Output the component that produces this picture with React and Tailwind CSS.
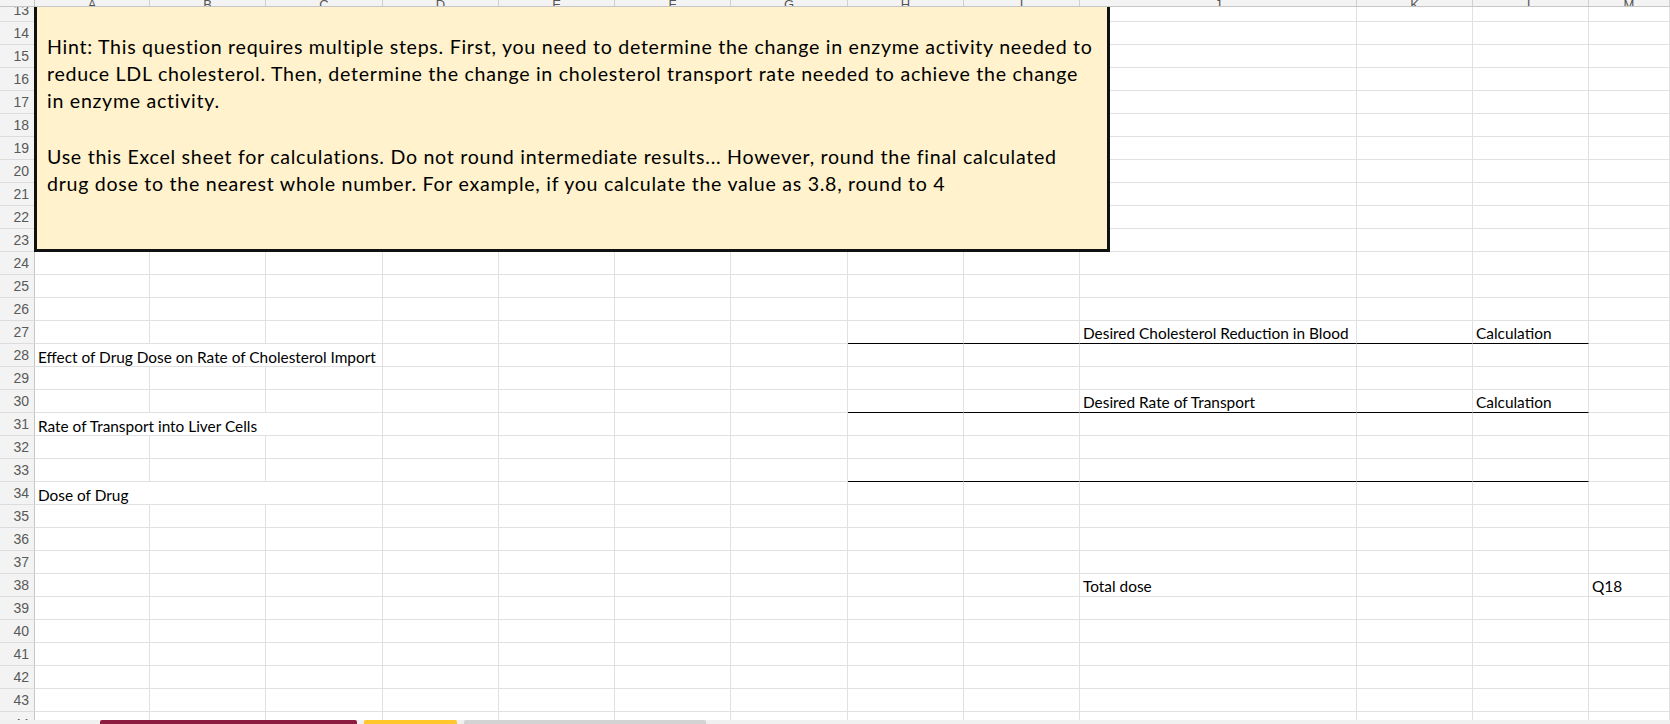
import React from "react";

// column widths (A..L), M takes the rest
const COLS = [
  "w-[115px]",
  "w-[116px]",
  "w-[117px]",
  "w-[116px]",
  "w-[116px]",
  "w-[116px]",
  "w-[117px]",
  "w-[116px]",
  "w-[116px]",
  "w-[277px]",
  "w-[116px]",
  "w-[116px]",
  "flex-1",
];
const LETTERS = ["A", "B", "C", "D", "E", "F", "G", "H", "I", "J", "K", "L", "M"];

// sheet contents by row number
const CONTENT = {
  27: {
    cells: { 9: "Desired Cholesterol Reduction in Blood", 11: "Calculation" },
    underline: true,
  },
  28: { merged: { text: "Effect of Drug Dose on Rate of Cholesterol Import", span: 3, width: "w-[348px]" } },
  30: {
    cells: { 9: "Desired Rate of Transport", 11: "Calculation" },
    underline: true,
  },
  31: { merged: { text: "Rate of Transport into Liver Cells", span: 3, width: "w-[348px]" } },
  33: { underline: true },
  34: { merged: { text: "Dose of Drug", span: 3, width: "w-[348px]" } },
  38: { cells: { 9: "Total dose", 12: "Q18" } },
};

function Cell({ width, text, dark, low }) {
  return (
    <div
      className={`${width} shrink-0 h-full flex items-end border-r border-r-[#e1e1e1] border-b ${
        dark ? "border-b-black" : "border-b-[#e1e1e1]"
      } overflow-visible`}
    >
      {text && (
        <span
          className={`pl-[3px] whitespace-nowrap text-[15.4px] text-black font-['Lato',sans-serif] ${
            low ? "leading-[17px]" : "leading-[20px]"
          }`}
        >
          {text}
        </span>
      )}
    </div>
  );
}

function Row({ n, heightClass }) {
  const data = CONTENT[n] || {};
  const cells = [];
  let i = 0;
  while (i < COLS.length) {
    if (i === 0 && data.merged) {
      cells.push(<Cell key={i} width={data.merged.width} text={data.merged.text} low />);
      i += data.merged.span;
      continue;
    }
    const dark = data.underline && i >= 7 && i <= 11;
    cells.push(<Cell key={i} width={COLS[i]} text={data.cells?.[i]} dark={dark} />);
    i++;
  }
  return (
    <div className={`flex ${heightClass} shrink-0 overflow-hidden`}>
      <div className="w-[35px] shrink-0 h-full bg-[#f3f3f3] border-r border-r-[#c6c6c6] border-b border-b-[#dcdcdc] flex items-end justify-end overflow-hidden">
        <span className="pr-[5px] pb-[2px] text-[14px] leading-[18px] text-[#595959] font-['Liberation_Sans',sans-serif]">
          {n}
        </span>
      </div>
      {cells}
    </div>
  );
}

export default function App() {
  const rows = [];
  for (let n = 14; n <= 43; n++) rows.push(n);

  return (
    <div className="w-[1670px] h-[724px] overflow-hidden bg-white flex flex-col">
      {/* column header, mostly scrolled away */}
      <div className="flex h-[7px] shrink-0 bg-[#f3f3f3] border-b border-b-[#c6c6c6] overflow-hidden relative z-10">
        <div className="w-[35px] shrink-0 border-r border-r-[#c6c6c6]" />
        {COLS.map((w, i) => (
          <div
            key={i}
            className={`${w} shrink-0 h-full border-r border-r-[#d0d0d0] flex items-end justify-center`}
          >
            <span className="block leading-[14px] text-[13px] text-[#555] font-['Liberation_Sans',sans-serif] translate-y-[6px]">
              {LETTERS[i]}
            </span>
          </div>
        ))}
      </div>

      {/* sheet body */}
      <div className="relative flex-1 overflow-hidden flex flex-col">
        <Row n={13} heightClass="h-[15px]" />
        {rows.map((n) => (
          <Row key={n} n={n} heightClass="h-[23px]" />
        ))}
        <div className="flex h-[8px] shrink-0 overflow-hidden items-start">
          <div className="w-[35px] shrink-0 h-full bg-[#f3f3f3] border-r border-r-[#c6c6c6] flex justify-end overflow-hidden">
            <span className="pr-[5px] pt-[3px] text-[14px] leading-[18px] text-[#595959] font-['Liberation_Sans',sans-serif]">
              44
            </span>
          </div>
          {COLS.map((w, i) => (
            <div key={i} className={`${w} shrink-0 h-full border-r border-r-[#e1e1e1]`} />
          ))}
        </div>

        {/* hint text box */}
        <div className="absolute left-[34px] top-[-3px] w-[1076px] h-[248px] bg-[#fff2cc] border-[3px] border-[#111]">
          <div className="pl-[10px] pt-[26px] text-[19.6px] tracking-[0.72px] leading-[27px] text-black font-['Lato',sans-serif] whitespace-nowrap">
            <div>
              Hint: This question requires multiple steps. First, you need to determine the change in enzyme activity needed to
            </div>
            <div>
              reduce LDL cholesterol. Then, determine the change in cholesterol transport rate needed to achieve the change
            </div>
            <div>in enzyme activity.</div>
            <div className="h-[29px]" />
            <div>
              Use this Excel sheet for calculations. Do not round intermediate results... However, round the final calculated
            </div>
            <div>
              drug dose to the nearest whole number. For example, if you calculate the value as 3.8, round to 4
            </div>
          </div>
        </div>
      </div>

      {/* sheet tabs strip */}
      <div className="h-[4px] shrink-0 bg-[#f0f0f0] flex items-end">
        <div className="w-[100px] shrink-0" />
        <div className="w-[257px] h-[4px] bg-[#8c1c40] rounded-t-[2px]" />
        <div className="w-[7px]" />
        <div className="w-[93px] h-[4px] bg-[#ffc72c] rounded-t-[2px]" />
        <div className="w-[7px]" />
        <div className="w-[242px] h-[4px] bg-[#d3d3d3] rounded-t-[2px]" />
      </div>
    </div>
  );
}
